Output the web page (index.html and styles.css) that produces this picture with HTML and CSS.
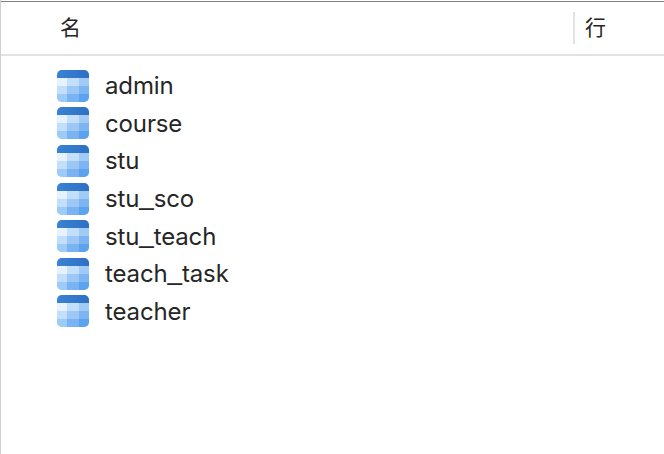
FILE: index.html
```html
<!DOCTYPE html>
<html lang="zh">
<head>
    <meta charset="UTF-8">
    <meta name="viewport" content="width=device-width, initial-scale=1.0">
    <title>数据表</title>
    <link rel="stylesheet" href="styles.css">
</head>
<body>
<!-- 表格图标，每一行共用 -->
<svg class="defs" width="0" height="0">
    <defs>
        <clipPath id="round"><rect width="32" height="32" rx="5"/></clipPath>
        <linearGradient id="bar" x1="0" y1="0" x2="1" y2="0">
            <stop offset="0" stop-color="#3a82d3"/>
            <stop offset="1" stop-color="#2d70c4"/>
        </linearGradient>
        <symbol id="table" viewBox="0 0 32 32">
            <g clip-path="url(#round)">
                <rect width="32" height="32" fill="#9ccbf8"/>
                <rect width="32" height="8" fill="url(#bar)"/>
                <rect y="8" width="10" height="8" fill="#e6f3fe"/>
                <rect x="10" y="8" width="12" height="8" fill="#c4dffa"/>
                <rect x="22" y="8" width="10" height="8" fill="#a0cbf7"/>
                <rect y="16" width="10" height="8" fill="#c1defa"/>
                <rect x="10" y="16" width="12" height="8" fill="#9dc8f5"/>
                <rect x="22" y="16" width="10" height="8" fill="#7db5f3"/>
                <rect y="24" width="10" height="8" fill="#9dcbf8"/>
                <rect x="10" y="24" width="12" height="8" fill="#7ab3f1"/>
                <rect x="22" y="24" width="10" height="8" fill="#5ba2ef"/>
            </g>
        </symbol>
    </defs>
</svg>
<div class="box">
    <div class="head">
        <div class="name">名</div>
        <div class="rows">行</div>
    </div>
    <ul class="list">
        <li><svg class="icon"><use href="#table"/></svg><p>admin</p></li>
        <li><svg class="icon"><use href="#table"/></svg><p>course</p></li>
        <li><svg class="icon"><use href="#table"/></svg><p>stu</p></li>
        <li><svg class="icon"><use href="#table"/></svg><p>stu<span class="line">_</span>sco</p></li>
        <li><svg class="icon"><use href="#table"/></svg><p>stu<span class="line">_</span>teach</p></li>
        <li><svg class="icon"><use href="#table"/></svg><p>teach<span class="line">_</span>task</p></li>
        <li><svg class="icon"><use href="#table"/></svg><p>teacher</p></li>
    </ul>
</div>
</body>
</html>
```
FILE: styles.css
```css
*{
    margin: 0;
    padding: 0;
    box-sizing: border-box;
}
body{
    background-color: #fff;
    color: #262626;
    font-family: Inter, "Noto Sans CJK SC", sans-serif;
}
.defs{
    display: block;
}
.box{
    height: 454px;
    padding-top: 1px;
    border-left: 1px solid #d0d0d0;
}
.head{
    display: flex;
    align-items: center;
    height: 55px;
    border-top: 1px solid #808080;
    border-bottom: 2px solid #e2e2e2;
    font-size: 21px;
}
.name{
    width: 572px;
    height: 32px;
    line-height: 32px;
    padding-left: 59px;
}
.rows{
    height: 32px;
    line-height: 32px;
    padding-left: 10px;
    border-left: 2px solid #e2e2e2;
}
.list{
    list-style: none;
    padding: 11px 0 0 56px;
}
.list li{
    display: flex;
    align-items: center;
    height: 37.6px;
    font-size: 24px;
    letter-spacing: -0.13px;
}
.icon{
    width: 32px;
    height: 32px;
    margin-right: 16px;
}
/* 下划线比 Inter 自带的宽一点 */
.line{
    font-family: "Liberation Sans", sans-serif;
    font-size: 26px;
    line-height: 0;
    vertical-align: 2px;
}
```
